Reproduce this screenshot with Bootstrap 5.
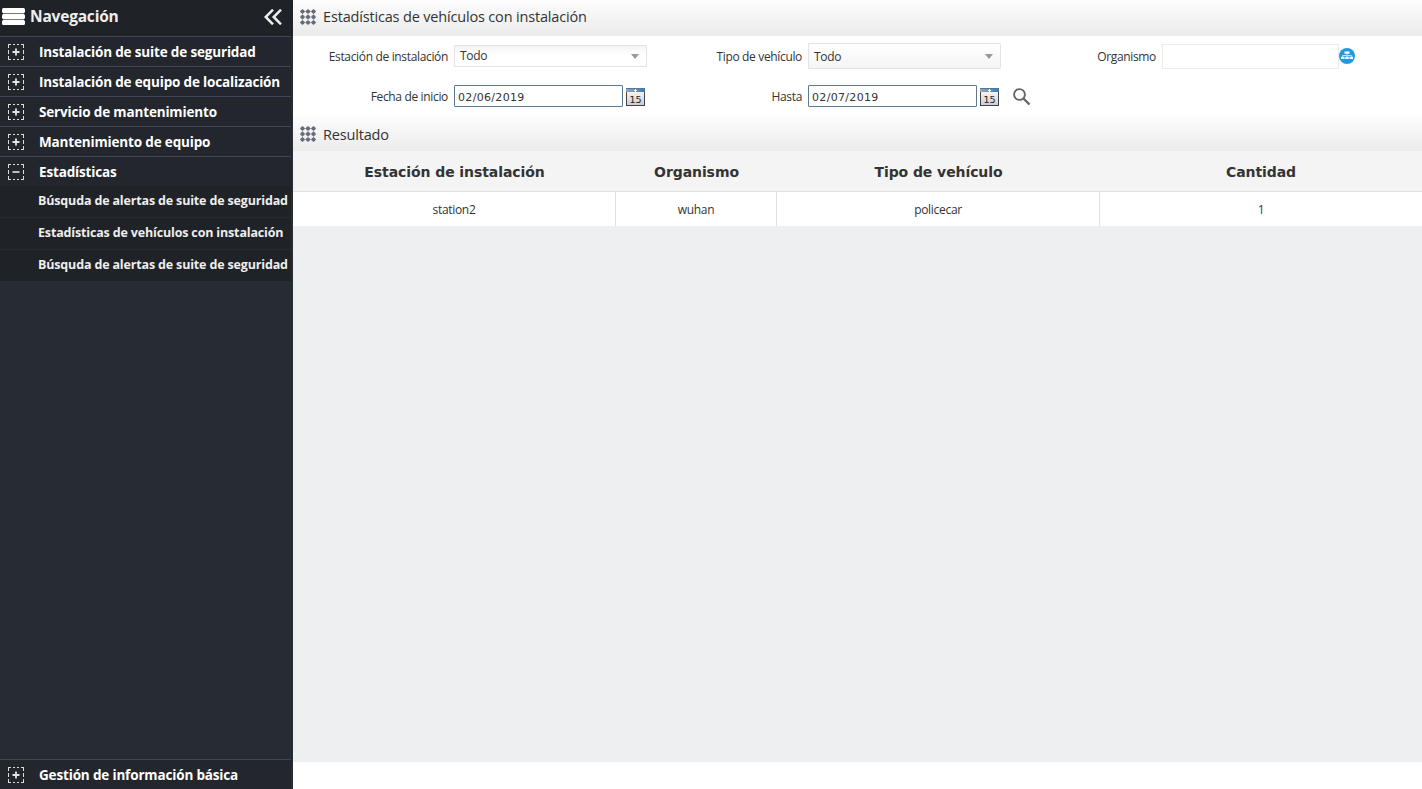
<!DOCTYPE html>
<html lang="es">
<head>
<meta charset="utf-8">
<meta name="viewport" content="width=device-width, initial-scale=1">
<title>Estadísticas de vehículos con instalación</title>
<link href="https://cdn.jsdelivr.net/npm/bootstrap@5.3.0/dist/css/bootstrap.min.css" rel="stylesheet">
<script src="https://cdn.jsdelivr.net/npm/bootstrap@5.3.0/dist/js/bootstrap.bundle.min.js" defer></script>
<style>
body{font-family:"Open Sans","Noto Sans",sans-serif;font-size:12px;color:#333;overflow:hidden;line-height:1.2}
svg{display:block;flex:none}
.side{width:293px;background:#272b33;color:#fff}
.side-head{height:36px;background:#1f2226;font-size:15.5px;letter-spacing:-.2px;font-weight:700;padding:0 11px 3px 2px;color:#eee}
.side-head span{margin-left:5px}
.side-row{width:291px;height:30px;background:#23272d;border-top:1px solid #414555;font-size:13.5px;letter-spacing:-.16px;font-weight:700;padding-left:8px;white-space:nowrap}
.side-row span{margin-left:15px;padding-top:2px}
.side-sub{width:291px;height:31px;margin-bottom:1px;background:#1f2226;font-size:12.5px;letter-spacing:-.16px;font-weight:700;color:#eee;padding:0 0 2px 38px;white-space:nowrap}
.bar-title{height:36px;background:linear-gradient(#fdfdfd,#ebebeb);font-size:14.5px;letter-spacing:-.17px;padding:0 0 2px 7px;gap:7px}
.bar-result{height:35px;padding-bottom:0}
.bar-result span{padding-top:2px}
.filters{height:80px}
.filter-row{height:40px}
.lbl{width:161px;text-align:right;white-space:nowrap;padding:2px 6px 0 0;letter-spacing:-.34px}
.lbl-wide{width:163px}
.combo{width:193px;height:22px;border:1px solid #e3e3e3;border-radius:1px;background:linear-gradient(#f5f5f5,#fff 50%);padding:0 7px 0 5px}
.combo span{padding-top:1px;letter-spacing:-.3px}
.combo.tall{height:26px;background:linear-gradient(#fff,#f5f5f5)}
.combo.tall span{padding-top:3px}
.caret{width:0;height:0;border:4px solid transparent;border-top:5px solid #999;border-bottom:0}
.datebox{width:169px;height:22px;border:1px solid #5c7a92;border-radius:1px;background:#fff;font-family:"DejaVu Sans",sans-serif;font-size:11px;letter-spacing:.32px;padding:3px 0 0 3px;margin-right:3px}
.cal{margin-top:2px}
.lens{margin:1px 0 0 14px}
.org{width:177px;height:25px;border:1px solid #ececec}
.grid-res{display:grid;grid-template-columns:323px 161px 323px 1fr}
.grid-res>div{display:flex;align-items:center;justify-content:center}
.grid-res>.th-cell{height:41px;background:#f4f4f4;border-bottom:1px solid #e1e1e1;font-family:"DejaVu Sans",sans-serif;font-weight:700;font-size:14px;letter-spacing:-.08px;padding-top:2px}
.grid-res>.td-cell{height:34px;background:#fff;border-right:1px solid #e1e1e1;letter-spacing:-.3px;padding-top:3px}
.grid-res>.td-cell:last-child{border-right:0;color:#336}
.blank-area{background:#eeeff1;margin-bottom:27px}
</style>
</head>
<body>
<svg width="0" height="0" class="position-absolute" aria-hidden="true">
<defs>
<symbol id="plus" viewBox="0 0 16 16"><path d="M0 .5h3m2 0h2m2 0h2m2 0h3M0 15.5h3m2 0h2m2 0h2m2 0h3M.5 1v3m0 2v4m0 2v3M15.5 1v3m0 2v4m0 2v3" stroke="#ddd" fill="none"/><path d="M4.500 8h7M8 4.500v7" stroke="#e4e4e4" stroke-width="1.800"/></symbol>
<symbol id="minus" viewBox="0 0 16 16"><path d="M0 .5h3m2 0h2m2 0h2m2 0h3M0 15.5h3m2 0h2m2 0h2m2 0h3M.5 1v3m0 2v4m0 2v3M15.5 1v3m0 2v4m0 2v3" stroke="#ddd" fill="none"/><path d="M4.500 8h7" stroke="#ddd" stroke-width="1.700"/></symbol>
<symbol id="dots" viewBox="0 0 16 16"><path d="M2.500 0v16M8 0v16M13.500 0v16M0 2.500h16M0 8h16M0 13.500h16" stroke="#a0a4ac" stroke-width="1"/><g fill="#666c79"><circle cx="2.500" cy="2.500" r="2.100"/><circle cx="8" cy="2.500" r="2.100"/><circle cx="13.500" cy="2.500" r="2.100"/><circle cx="2.500" cy="8" r="2.100"/><circle cx="8" cy="8" r="2.100"/><circle cx="13.500" cy="8" r="2.100"/><circle cx="2.500" cy="13.500" r="2.100"/><circle cx="8" cy="13.500" r="2.100"/><circle cx="13.500" cy="13.500" r="2.100"/></g></symbol>
<linearGradient id="calTop"><stop stop-color="#7fb0dc"/><stop offset="1" stop-color="#3c78b4"/></linearGradient>
<linearGradient id="calBody" x2="0" y2="1"><stop stop-color="#fff"/><stop offset="1" stop-color="#c9ccd3"/></linearGradient>
<symbol id="calendar" viewBox="0 0 19 18"><rect x=".5" y=".5" width="18" height="17" fill="url(#calBody)" stroke="#444"/><rect y="0" width="19" height="4" fill="url(#calTop)"/><path d="M0 .5h19" stroke="#5b7690"/><path d="M8 2.500h3M9.500 1v3" stroke="#fff"/></symbol>
</defs>
</svg>
<div class="d-flex vh-100">
  <nav class="side d-flex flex-column flex-shrink-0">
    <div class="side-head d-flex align-items-center">
      <svg width="23" height="17"><path d="M1 5.500h21M1 11.500h21" stroke="#777"/><rect width="23" height="5" rx="1.500" fill="#fff"/><rect y="6" width="23" height="5" rx="1.500" fill="#fff"/><rect y="12" width="23" height="5" rx="1.500" fill="#fff"/></svg>
      <span>Navegación</span>
      <svg class="ms-auto" width="18" height="16"><path d="M9 .7 1.700 8 9 15.300M17 .7 9.700 8l7.300 7.300" fill="none" stroke="#eee" stroke-width="2.500"/></svg>
    </div>
    <div class="side-row d-flex align-items-center"><svg width="16" height="16"><use href="#plus"/></svg><span>Instalación de suite de seguridad</span></div>
    <div class="side-row d-flex align-items-center"><svg width="16" height="16"><use href="#plus"/></svg><span>Instalación de equipo de localización</span></div>
    <div class="side-row d-flex align-items-center"><svg width="16" height="16"><use href="#plus"/></svg><span>Servicio de mantenimiento</span></div>
    <div class="side-row d-flex align-items-center"><svg width="16" height="16"><use href="#plus"/></svg><span>Mantenimiento de equipo</span></div>
    <div class="side-row d-flex align-items-center"><svg width="16" height="16"><use href="#minus"/></svg><span>Estadísticas</span></div>
    <div class="side-sub d-flex align-items-center"><span>Búsquda de alertas de suite de seguridad</span></div>
    <div class="side-sub d-flex align-items-center"><span>Estadísticas de vehículos con instalación</span></div>
    <div class="side-sub d-flex align-items-center"><span>Búsquda de alertas de suite de seguridad</span></div>
    <div class="side-row d-flex align-items-center mt-auto"><svg width="16" height="16"><use href="#plus"/></svg><span>Gestión de información básica</span></div>
  </nav>
  <main class="flex-grow-1 d-flex flex-column">
    <div class="bar-title d-flex align-items-center"><svg width="16" height="16"><use href="#dots"/></svg><span>Estadísticas de vehículos con instalación</span></div>
    <div class="filters">
      <div class="filter-row d-flex align-items-center">
        <div class="lbl">Estación de instalación</div>
        <div class="combo d-flex align-items-center justify-content-between"><span>Todo</span><i class="caret"></i></div>
        <div class="lbl">Tipo de vehículo</div>
        <div class="combo tall d-flex align-items-center justify-content-between"><span>Todo</span><i class="caret"></i></div>
        <div class="lbl">Organismo</div>
        <div class="org"></div>
        <svg width="16" height="16"><circle cx="8" cy="8" r="8" fill="#2299dc"/><path d="M5.500 3.500h5v2.300h-5zM2 8.700h3.500v2.300H2zM6.300 8.700h3.500v2.300H6.300zM10.500 8.700H14v2.300h-3.500z" fill="#fff"/><path d="M8 6v3M3.500 9V7.500h9V9" stroke="#b8e0f5" fill="none"/></svg>
      </div>
      <div class="filter-row d-flex align-items-center">
        <div class="lbl">Fecha de inicio</div>
        <div class="datebox d-flex align-items-center">02/06/2019</div>
        <svg class="cal" width="19" height="18"><use href="#calendar"/><text x="9.500" y="15" text-anchor="middle" font-family="DejaVu Sans" font-size="9.500" fill="#222">15</text></svg>
        <div class="lbl lbl-wide">Hasta</div>
        <div class="datebox d-flex align-items-center">02/07/2019</div>
        <svg class="cal" width="19" height="18"><use href="#calendar"/><text x="9.500" y="15" text-anchor="middle" font-family="DejaVu Sans" font-size="9.500" fill="#222">15</text></svg>
        <svg class="lens" width="18" height="18"><circle cx="6.500" cy="6.500" r="5.400" fill="none" stroke="#666" stroke-width="1.900"/><path d="m10.500 10.500 6 6" stroke="#666" stroke-width="2.400"/></svg>
      </div>
    </div>
    <div class="bar-title bar-result d-flex align-items-center"><svg width="16" height="16"><use href="#dots"/></svg><span>Resultado</span></div>
    <div class="grid-res">
      <div class="th-cell">Estación de instalación</div><div class="th-cell">Organismo</div><div class="th-cell">Tipo de vehículo</div><div class="th-cell">Cantidad</div>
      <div class="td-cell">station2</div><div class="td-cell">wuhan</div><div class="td-cell">policecar</div><div class="td-cell">1</div>
    </div>
    <div class="blank-area flex-grow-1"></div>
  </main>
</div>
</body>
</html>
